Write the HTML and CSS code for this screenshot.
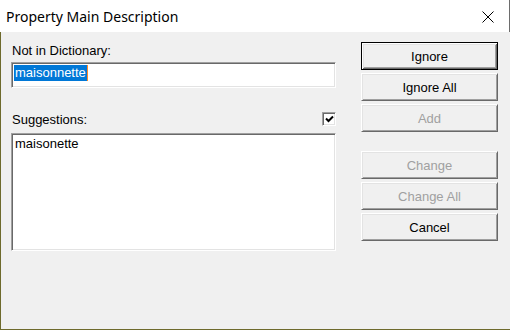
FILE: index.html
```html
<!DOCTYPE html>
<html lang="en">
  <head>
    <meta charset="UTF-8" />
    <title>Property Main Description</title>
    <link rel="stylesheet" href="styles.css">
  </head>
  <body>
    <div class="window">
      <div class="titlebar">
        <span class="title">Property Main Description</span>
        <svg class="close" width="12" height="12" viewBox="0 0 12 12">
          <path d="M0.5 0.5 L11.5 11.5 M11.5 0.5 L0.5 11.5" stroke="#000" stroke-width="1" fill="none" />
        </svg>
      </div>
      <div class="client">
        <div class="left">
          <div class="label">Not in Dictionary:</div>
          <div class="field">
            <span class="selected">maisonnette</span><span class="caret"></span>
          </div>
          <div class="sugg-row">
            <span class="label">Suggestions:</span>
            <span class="check">
              <svg width="9" height="8" viewBox="0 0 9 8">
                <path d="M1 3.5 L3.5 6 L8 1.5" stroke="#000" stroke-width="2" fill="none" />
              </svg>
            </span>
          </div>
          <div class="list">
            <div class="item">maisonette</div>
          </div>
        </div>
        <div class="buttons">
          <div class="group">
            <div class="btn default">Ignore</div>
            <div class="btn">Ignore All</div>
            <div class="btn disabled">Add</div>
          </div>
          <div class="group">
            <div class="btn disabled">Change</div>
            <div class="btn disabled">Change All</div>
            <div class="btn">Cancel</div>
          </div>
        </div>
      </div>
    </div>
  </body>
</html>
```

FILE: styles.css
```css
* {
  padding: 0;
  margin: 0;
  box-sizing: border-box;
}

body {
  width: 510px;
  height: 330px;
  overflow: hidden;
  font-family: "Liberation Sans", Arial, sans-serif;
}

.window {
  width: 510px;
  height: 330px;
  display: flex;
  flex-direction: column;
}

.titlebar {
  height: 32px;
  background: #ffffff;
  display: flex;
  align-items: center;
  justify-content: space-between;
  padding: 0 15px 0 6px;
  border-right: 1px solid #6d6d6d;
}

.title {
  font-family: "Noto Sans", sans-serif;
  font-size: 14px;
  color: #000;
  margin-top: 1px;
}

.close {
  display: block;
  margin-top: 2px;
}

.client {
  flex: 1;
  background: #f0f0f0;
  border-left: 1px solid #6e6a2c;
  border-bottom: 1px solid #6e6a2c;
  padding: 10px 0 0 10px;
  display: grid;
  grid-template-columns: 325px 137px;
  column-gap: 25px;
  align-items: start;
}

.label {
  font-size: 13px;
  line-height: 16px;
  color: #000;
  padding-left: 1px;
}

.left {
  padding-top: 1px;
}

.left > .label {
  margin-bottom: 3px;
}

.field {
  height: 26px;
  background: #fff;
  border: 1px solid;
  border-color: #a0a0a0 #ffffff #ffffff #a0a0a0;
  box-shadow: inset 1px 1px #696969, inset -1px -1px #e3e3e3;
  padding: 2px 0 0 2px;
  display: flex;
  align-items: flex-start;
}

.selected {
  font-size: 13px;
  line-height: 16px;
  background: #0078d7;
  color: #fff;
  padding: 0 1px;
}

.caret {
  width: 1px;
  height: 16px;
  background: #ff8828;
}

.sugg-row {
  margin-top: 24px;
  height: 16px;
  display: flex;
  justify-content: space-between;
  align-items: center;
}

.check {
  width: 14px;
  height: 14px;
  margin-top: -2px;
  background: #fff;
  border: 1px solid;
  border-color: #a0a0a0 #ffffff #ffffff #a0a0a0;
  box-shadow: inset 1px 1px #696969, inset -1px -1px #e3e3e3;
  display: flex;
  align-items: center;
  justify-content: center;
}

.check svg {
  display: block;
}

.list {
  margin-top: 5px;
  height: 118px;
  background: #fff;
  border: 1px solid;
  border-color: #a0a0a0 #ffffff #ffffff #a0a0a0;
  box-shadow: inset 1px 1px #696969, inset -1px -1px #e3e3e3;
  padding: 2px 3px;
}

.item {
  font-size: 13px;
  line-height: 16px;
  color: #000;
}

.buttons {
  display: flex;
  flex-direction: column;
  gap: 19px;
}

.group {
  display: flex;
  flex-direction: column;
  gap: 3px;
}

.btn {
  height: 28px;
  background: #f0f0f0;
  border: 1px solid;
  border-color: #ffffff #696969 #696969 #ffffff;
  box-shadow: inset 1px 1px #e3e3e3, inset -1px -1px #a0a0a0;
  font-size: 13px;
  color: #000;
  display: flex;
  align-items: center;
  justify-content: center;
}

.btn.default {
  border-color: #000;
  box-shadow: inset 1px 1px #fff, inset -1px -1px #696969, inset 2px 2px #e3e3e3, inset -2px -2px #a0a0a0;
}

.btn.disabled {
  color: #a0a0a0;
}
```
